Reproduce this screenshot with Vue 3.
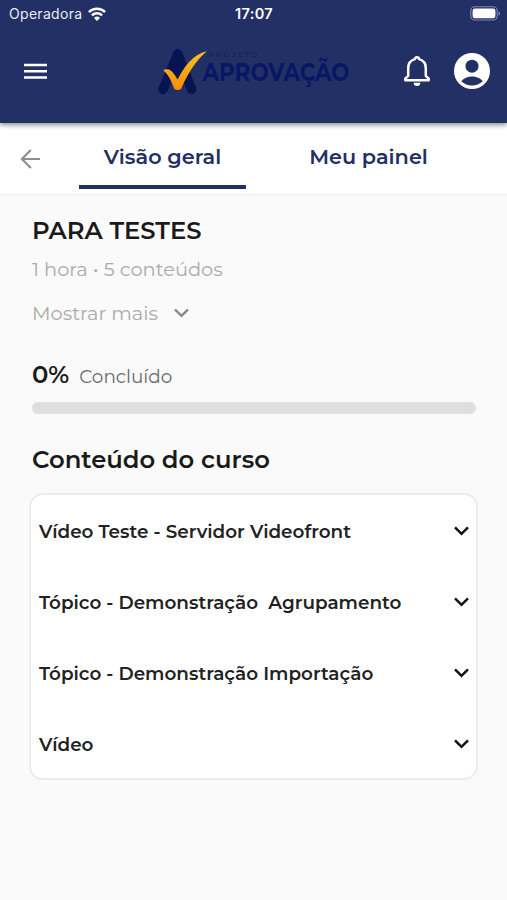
<script setup>
import { ref } from "vue";

const tabs = ["Visão geral", "Meu painel"];
const activeTab = ref(0);

const course = {
	title: "PARA TESTES",
	info: "1 hora • 5 conteúdos",
	progress: 0,
};

const topics = [
	{ id: 1, name: "Vídeo Teste - Servidor Videofront" },
	{ id: 2, name: "Tópico - Demonstração  Agrupamento" },
	{ id: 3, name: "Tópico - Demonstração Importação" },
	{ id: 4, name: "Vídeo" },
];
</script>

<template>
	<div class="app">
		<header class="header">
			<div class="status-bar">
				<div class="carrier">
					<span class="carrier-name">Operadora</span>
					<svg width="18" height="14" viewBox="0 0 18 14" fill="none" stroke="#fff" stroke-width="2.4">
						<path d="M0.9 5.1a11.5 11.5 0 0 1 16.2 0" />
						<path d="M3.9 8.3a7.2 7.2 0 0 1 10.2 0" />
						<path d="M9 14 6 10.9a4.3 4.3 0 0 1 6 0z" fill="#fff" stroke="none" />
					</svg>
				</div>
				<span class="clock">17:07</span>
				<svg class="battery" width="31" height="15" viewBox="0 0 31 15">
					<rect x="0.8" y="0.8" width="26.4" height="13.2" rx="4" fill="none" stroke="#8088ae" stroke-width="1.1" />
					<rect x="2.6" y="2.6" width="22.8" height="9.6" rx="2.2" fill="#fff" />
					<path d="M28.5 5.2c2.2 0.8 2.2 3.6 0 4.4z" fill="#8088ae" />
				</svg>
			</div>

			<nav class="navbar">
				<button type="button" class="icon-btn" aria-label="Menu">
					<svg width="23" height="16" viewBox="0 0 23 16" fill="#fff">
						<path d="M0 .8h23v2.500H0zM0 7.100h23v2.500H0zM0 13.300h23v2.500H0z" />
					</svg>
				</button>

				<svg class="logo" width="200" height="54" viewBox="156 44 200 54">
					<path
						d="M163 89.500 177.700 53.800 191.700 89.500"
						fill="none"
						stroke="#071452"
						stroke-width="9.500"
						stroke-linecap="round"
						stroke-linejoin="round"
					/>
					<path d="M173 62h9l4 16h-17z" fill="#071452" />
					<defs>
						<linearGradient id="check" x1="0" y1="0" x2="0" y2="1">
							<stop offset="0" stop-color="#f6c32b" />
							<stop offset="1" stop-color="#fb8c00" />
						</linearGradient>
					</defs>
					<path
						d="M163.200 70.200c2-1.300 5.800-1.300 7.500.3 2.700 2.300 4.900 5.400 6.900 9.300C184 66.500 193.500 54 206.800 51.300C196.500 60 188 73 181 89q-3.400 2.200-6.600 0C171.200 80.500 168.300 74.500 163.200 70.200z"
						fill="url(#check)"
					/>
					<text class="logo-small" x="208.500" y="57" textLength="49">PROJETO</text>
					<text class="logo-name" x="202.500" y="81" textLength="147" lengthAdjust="spacingAndGlyphs">APROVAÇÃO</text>
				</svg>

				<div class="actions">
					<button type="button" class="icon-btn" aria-label="Notificações">
						<svg width="26" height="30" viewBox="0 0 26 30">
							<path
								d="M1.300 24.200v-1.600l2.900-2.800V12.300C4.200 7.500 7 4.100 10.900 3.100Q11.200 1.300 13 1.300T15.100 3.100C19 4.100 21.800 7.500 21.800 12.300v7.500l2.900 2.800v1.600z"
								fill="none"
								stroke="#fff"
								stroke-width="2.500"
								stroke-linejoin="round"
							/>
							<path d="M9.700 26.800h6.600a3.300 3.200 0 0 1-6.600 0z" fill="#fff" />
						</svg>
					</button>
					<button type="button" class="icon-btn" aria-label="Perfil">
						<svg width="36" height="36" viewBox="0 0 36 36">
							<circle cx="18" cy="18" r="18" fill="#fff" />
							<circle cx="18" cy="13.200" r="6.500" fill="#233066" />
							<path d="M7.300 28.200C9.500 25.300 14 23.600 18 23.600s8.500 1.700 10.700 4.600C26 31 22 32.400 18 32.400S10 31 7.300 28.200z" fill="#233066" />
						</svg>
					</button>
				</div>
			</nav>
		</header>

		<div class="tabs">
			<button type="button" class="back-btn" aria-label="Voltar">
				<svg width="20" height="20" viewBox="0 0 20 20" fill="none" stroke="#8f8f8f" stroke-width="2.200">
					<path d="M20 10H2M10.800 1 1.900 10l8.900 9" />
				</svg>
			</button>
			<button
				v-for="(tab, i) in tabs"
				:key="tab"
				type="button"
				class="tab"
				:class="{ active: activeTab === i }"
				@click="activeTab = i"
			>
				{{ tab }}
			</button>
		</div>

		<main class="content">
			<h1 class="title">{{ course.title }}</h1>
			<p class="info">{{ course.info }}</p>
			<button type="button" class="more">
				<span>Mostrar mais</span>
				<svg width="15" height="10" viewBox="0 0 15 10" fill="none" stroke="#858585" stroke-width="2.400">
					<path d="M1 1.500l6.500 6.300L14 1.500" />
				</svg>
			</button>

			<div class="progress-label">
				<strong class="percent">{{ course.progress }}%</strong>
				<span class="done">Concluído</span>
			</div>
			<div class="progress">
				<div class="progress-value" :style="{ width: course.progress + '%' }"></div>
			</div>

			<h2 class="subtitle">Conteúdo do curso</h2>
			<ul class="topics">
				<li v-for="topic in topics" :key="topic.id" class="topic">
					<span class="topic-name">{{ topic.name }}</span>
					<svg width="15" height="10" viewBox="0 0 15 10" fill="none" stroke="#111" stroke-width="2.500">
						<path d="M1 1.300l6.500 6.500L14 1.300" />
					</svg>
				</li>
			</ul>
		</main>
	</div>
</template>

<style>
body {
	margin: 0;
	background-color: #fafafa;
}
</style>

<style scoped>
.app {
	min-height: 100vh;
	background-color: #fafafa;
	color: #1a1a1a;
	font-family: Montserrat, Inter, sans-serif;
}

button {
	border: none;
	padding: 0;
	background: none;
	font-family: inherit;
	cursor: pointer;
}

svg {
	display: block;
	flex-shrink: 0;
}

.header {
	position: relative;
	z-index: 1;
	height: 123px;
	background-color: #233066;
	color: #fff;
	box-shadow: 0 2px 5px rgba(0, 0, 0, 0.45);
}

.status-bar {
	display: grid;
	grid-template-columns: 1fr auto 1fr;
	align-items: center;
	height: 27px;
	padding: 0 6px 0 9px;
	font-family: Inter, sans-serif;
	font-size: 14px;
}

.carrier {
	display: flex;
	align-items: center;
	gap: 6px;
}

.carrier-name {
	letter-spacing: 0.3px;
	color: #e8eaf2;
}

.clock {
	margin-right: 2px;
	font-weight: 600;
	font-size: 14.5px;
	letter-spacing: 0.35px;
}

.battery {
	justify-self: end;
}

.navbar {
	display: flex;
	align-items: center;
	height: 88px;
	padding: 0 17px 0 24px;
}

.logo {
	margin-left: 109px;
	overflow: visible;
}

.logo-small {
	font-size: 8px;
	font-weight: 500;
	fill: #152058;
}

.logo-name {
	font-size: 25px;
	font-weight: 700;
	fill: #071665;
}

.actions {
	display: flex;
	align-items: center;
	gap: 24px;
	margin-left: auto;
}

.tabs {
	display: flex;
	height: 72px;
	box-sizing: border-box;
	padding-left: 20px;
	background-color: #fff;
	border-bottom: 1px solid #ececec;
}

.back-btn {
	width: 59px;
}

.tab {
	width: 167px;
	height: 66px;
	margin-right: 39px;
	padding-top: 4px;
	box-sizing: border-box;
	border-bottom: 4px solid transparent;
	color: #233066;
	font-size: 20.8px;
	font-weight: 600;
}

.tab.active {
	border-bottom-color: #233066;
}

.content {
	padding: 19px 29px 0 32px;
}

.title,
.subtitle {
	margin: 0;
	font-size: 24.3px;
	font-weight: 600;
	line-height: 32px;
}

.info {
	margin: 8px 0 0;
	color: #ababab;
	font-size: 19.4px;
	font-weight: 400;
	line-height: 30px;
}

.more {
	display: flex;
	align-items: center;
	gap: 16px;
	margin-top: 14px;
	color: #ababab;
	font-size: 19.4px;
	font-weight: 400;
	line-height: 30px;
}

.progress-label {
	display: flex;
	align-items: baseline;
	gap: 10px;
	margin-top: 30px;
	line-height: 32px;
}

.percent {
	font-size: 24.3px;
	font-weight: 600;
}

.done {
	color: #6a6a6a;
	font-size: 18.4px;
}

.progress {
	height: 12px;
	margin: 9px 2px 0 0;
	border-radius: 6px;
	background-color: #dedede;
	overflow: hidden;
}

.progress-value {
	height: 100%;
	background-color: #233066;
}

.subtitle {
	margin-top: 29px;
}

.topics {
	height: 287px;
	box-sizing: border-box;
	margin: 18px 0 0 -3px;
	padding: 1px 7px 0 8px;
	border: 2px solid #ececee;
	border-radius: 14px;
	background-color: #fff;
	list-style: none;
}

.topic {
	display: flex;
	align-items: center;
	justify-content: space-between;
	height: 70.800px;
}

.topic-name {
	padding-top: 1px;
	color: #222;
	font-size: 18.400px;
	font-weight: 600;
	white-space: pre;
}
</style>
